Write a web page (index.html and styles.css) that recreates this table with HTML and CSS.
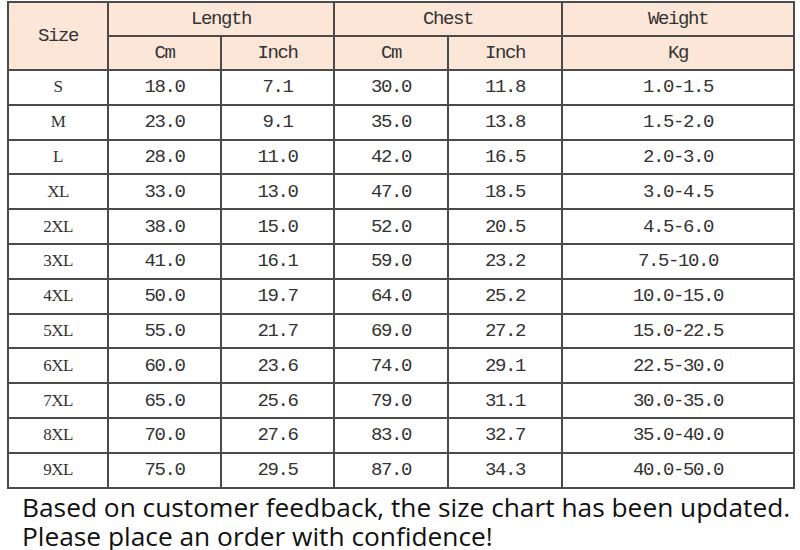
FILE: index.html
```html
<!DOCTYPE html>
<html>
<head>
<meta charset="utf-8">
<link rel="stylesheet" href="styles.css">
</head>
<body>
<div class="page">
<table class="chart">
<colgroup>
<col class="c-size"><col class="c-num"><col class="c-num"><col class="c-num2"><col class="c-num2"><col class="c-wt">
</colgroup>
<thead>
<tr class="hrow"><th rowspan="2">Size</th><th colspan="2">Length</th><th colspan="2">Chest</th><th>Weight</th></tr>
<tr class="hrow"><th>Cm</th><th>Inch</th><th>Cm</th><th>Inch</th><th>Kg</th></tr>
</thead>
<tbody>
<tr><td class="sz">S</td><td>18.0</td><td>7.1</td><td>30.0</td><td>11.8</td><td>1.0-1.5</td></tr>
<tr><td class="sz">M</td><td>23.0</td><td>9.1</td><td>35.0</td><td>13.8</td><td>1.5-2.0</td></tr>
<tr><td class="sz">L</td><td>28.0</td><td>11.0</td><td>42.0</td><td>16.5</td><td>2.0-3.0</td></tr>
<tr><td class="sz">XL</td><td>33.0</td><td>13.0</td><td>47.0</td><td>18.5</td><td>3.0-4.5</td></tr>
<tr><td class="sz">2XL</td><td>38.0</td><td>15.0</td><td>52.0</td><td>20.5</td><td>4.5-6.0</td></tr>
<tr><td class="sz">3XL</td><td>41.0</td><td>16.1</td><td>59.0</td><td>23.2</td><td>7.5-10.0</td></tr>
<tr><td class="sz">4XL</td><td>50.0</td><td>19.7</td><td>64.0</td><td>25.2</td><td>10.0-15.0</td></tr>
<tr><td class="sz">5XL</td><td>55.0</td><td>21.7</td><td>69.0</td><td>27.2</td><td>15.0-22.5</td></tr>
<tr><td class="sz">6XL</td><td>60.0</td><td>23.6</td><td>74.0</td><td>29.1</td><td>22.5-30.0</td></tr>
<tr><td class="sz">7XL</td><td>65.0</td><td>25.6</td><td>79.0</td><td>31.1</td><td>30.0-35.0</td></tr>
<tr><td class="sz">8XL</td><td>70.0</td><td>27.6</td><td>83.0</td><td>32.7</td><td>35.0-40.0</td></tr>
<tr><td class="sz">9XL</td><td>75.0</td><td>29.5</td><td>87.0</td><td>34.3</td><td>40.0-50.0</td></tr>
</tbody>
</table>
<p class="note">Based on customer feedback, the size chart has been updated.<br>Please place an order with confidence!</p>
</div>
</body>
</html>
```
FILE: styles.css
```css
html, body {
  margin: 0;
  padding: 0;
  background: #ffffff;
}
.page {
  width: 800px;
  height: 550px;
  overflow: hidden;
}
.chart {
  border-collapse: collapse;
  table-layout: fixed;
  margin: 1px 0 0 7px;
  width: 786px;
  font-family: "Liberation Mono", "DejaVu Sans Mono", monospace;
  font-size: 19px;
  letter-spacing: -1.4px;
  color: #333333;
}
.c-size { width: 100px; }
.c-num { width: 113px; }
.c-num2 { width: 114px; }
.c-wt { width: 232px; }
.chart th, .chart td {
  border: 2px solid #4b4b4b;
  text-align: center;
  padding: 0;
  font-weight: normal;
  line-height: 20px;
}
.chart th {
  background: #fce6d8;
  height: 32px;
}
.chart td {
  height: 32.8px;
}
.chart td.sz {
  font-family: "Liberation Serif", "DejaVu Serif", serif;
  font-size: 17px;
  letter-spacing: -0.5px;
}
.note {
  margin: 0;
  padding: 4px 0 0 22px;
  font-family: "Open Sans", "Noto Sans", sans-serif;
  font-size: 26.3px;
  line-height: 29px;
  color: #111;
  white-space: nowrap;
}
```
